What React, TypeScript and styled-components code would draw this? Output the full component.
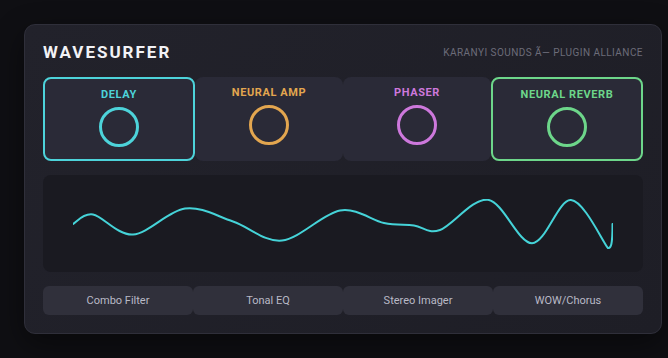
import React from "react";
import styled, { createGlobalStyle } from "styled-components";

const Global = createGlobalStyle`
  html, body { margin: 0; padding: 0; background: #0f0f13; }
  body { font-family: Roboto, "Liberation Sans", sans-serif; }
  * { box-sizing: border-box; }
`;

const Page = styled.div`
  padding: 24px 0 0 24px;
  min-height: 358px;
  background: #0f0f13;
`;

const Panel = styled.div`
  width: 638px;
  display: flex;
  flex-direction: column;
  gap: 14px;
  padding: 16px 18px 18px;
  border: 1px solid #2f2f3a;
  border-radius: 11px;
  background: linear-gradient(135deg, #22222b 0%, #1e1e26 100%);
  box-shadow: 0 10px 30px rgba(0, 0, 0, 0.45);
`;

const Header = styled.div`
  height: 22px;
  display: flex;
  align-items: center;
  justify-content: space-between;
`;

const Title = styled.h1`
  margin: 0;
  font-size: 17px;
  line-height: 19px;
  font-weight: 700;
  letter-spacing: 2px;
  color: #f2f2f6;
`;

const Maker = styled.span`
  font-size: 10px;
  letter-spacing: 0.45px;
  color: #6c6c79;
`;

const Modules = styled.div`
  display: flex;
`;

const Module = styled.div<{ $active?: boolean; $color: string }>`
  box-sizing: content-box;
  flex: 1 1 0;
  min-width: 0;
  display: flex;
  flex-direction: column;
  align-items: center;
  gap: 6px;
  padding: 10px 0 12px;
  border-radius: 8px;
  background: #2a2a37;
  border: ${(p) => (p.$active ? `2px solid ${p.$color}` : "none")};
`;

const ModuleLabel = styled.span<{ $color: string }>`
  font-size: 11px;
  line-height: 12px;
  font-weight: 700;
  letter-spacing: 0.6px;
  color: ${(p) => p.$color};
`;

const Knob = styled.div<{ $color: string }>`
  width: 40px;
  height: 40px;
  border-radius: 50%;
  border: 3px solid ${(p) => p.$color};
`;

const Scope = styled.div`
  height: 97px;
  display: flex;
  align-items: center;
  justify-content: center;
  padding: 0 30px;
  border-radius: 8px;
  background: #1a1a21;
`;

const Buttons = styled.div`
  display: grid;
  grid-template-columns: repeat(4, 1fr);
`;

const Button = styled.button`
  height: 29px;
  border: none;
  border-radius: 6px;
  background: #30303b;
  color: #b9b9c6;
  font-family: Roboto, "Liberation Sans", sans-serif;
  font-size: 11px;
  padding: 0;
`;

const modules = [
  { name: "DELAY", color: "#4dd3da", active: true },
  { name: "NEURAL AMP", color: "#e3a64f", active: false },
  { name: "PHASER", color: "#cd78dc", active: false },
  { name: "NEURAL REVERB", color: "#6dd68a", active: true },
];

const buttons = ["Combo Filter", "Tonal EQ", "Stereo Imager", "WOW/Chorus"];

const pts: [number, number][] = [
  [0, 25], [20, 15.5], [60, 35.5], [112, 9.5], [160, 22.5], [209, 41.5],
  [267, 11.5], [311, 24], [341, 26.5], [367, 31], [415, 0.8],
  [459, 44.2], [498, 1], [535, 49.2],
];

function catmull(p: [number, number][]): string {
  let d = `M${p[0][0]},${p[0][1]}`;
  for (let i = 0; i < p.length - 1; i++) {
    const p0 = p[i - 1] || p[i];
    const p1 = p[i];
    const p2 = p[i + 1];
    const p3 = p[i + 2] || p2;
    const c1x = p1[0] + (p2[0] - p0[0]) / 6;
    const c1y = p1[1] + (p2[1] - p0[1]) / 6;
    const c2x = p2[0] - (p3[0] - p1[0]) / 6;
    const c2y = p2[1] - (p3[1] - p1[1]) / 6;
    d += ` C${c1x.toFixed(1)},${c1y.toFixed(1)} ${c2x.toFixed(1)},${c2y.toFixed(1)} ${p2[0]},${p2[1]}`;
  }
  return d + " C538,49.2 539.5,46 539.5,25";
}

const Wave = () => (
  <svg width="540" height="50" viewBox="0 0 540 50" style={{ overflow: "hidden", display: "block" }}>
    <path d={catmull(pts)} fill="none" stroke="#45d3d8" strokeWidth="2" strokeLinecap="round" />
  </svg>
);

export default function App() {
  return (
    <Page>
      <Global />
      <Panel>
        <Header>
          <Title>WAVESURFER</Title>
          <Maker>KARANYI SOUNDS Ã— PLUGIN ALLIANCE</Maker>
        </Header>
        <Modules>
          {modules.map((m) => (
            <Module key={m.name} $active={m.active} $color={m.color}>
              <ModuleLabel $color={m.color}>{m.name}</ModuleLabel>
              <Knob $color={m.color} />
            </Module>
          ))}
        </Modules>
        <Scope>
          <Wave />
        </Scope>
        <Buttons>
          {buttons.map((b) => (
            <Button key={b}>{b}</Button>
          ))}
        </Buttons>
      </Panel>
    </Page>
  );
}
